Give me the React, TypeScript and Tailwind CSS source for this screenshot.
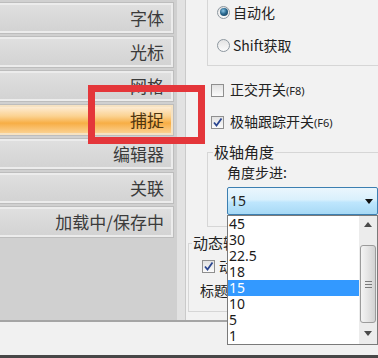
import React from 'react'

const navItems = ['字体', '光标', '网格', '捕捉', '编辑器', '关联', '加载中/保存中']
const activeItem = '捕捉'

const stepOptions = ['45', '30', '22.5', '18', '15', '10', '5', '1']
const selectedStep = '15'

function Radio({ checked }: { checked?: boolean }) {
  return (
    <span className="w-[13px] h-[13px] rounded-full border border-[#8d979f] bg-[linear-gradient(to_bottom,#e3e3e3,#fbfbfb)] flex items-center justify-center shrink-0">
      {checked && (
        <span className="w-[8px] h-[8px] rounded-full bg-[radial-gradient(circle_at_40%_35%,#8cc6e6_0%,#2a6990_45%,#133650_100%)]" />
      )}
    </span>
  )
}

function Checkbox({ checked }: { checked?: boolean }) {
  return (
    <span className="w-[13px] h-[13px] border border-[#8f8f8f] bg-[linear-gradient(to_bottom,#e2e2e2,#fbfbfb)] flex items-center justify-center shrink-0">
      {checked && (
        <svg width="11" height="11" viewBox="0 0 11 11">
          <path d="M2 5.5 L4.5 8.5 L9.5 1.5" fill="none" stroke="#2b4690" strokeWidth="1.8" />
        </svg>
      )}
    </span>
  )
}

function Triangle({ up, color = '#4a4a4a' }: { up?: boolean; color?: string }) {
  return (
    <svg width="8" height="5" viewBox="0 0 8 5">
      <path d={up ? 'M0 5 L4 0 L8 5 Z' : 'M0 0 L8 0 L4 5 Z'} fill={color} />
    </svg>
  )
}

export default function App() {
  return (
    <div className="relative w-[378px] h-[358px] overflow-hidden bg-[#f0f0f0] font-['Noto_Sans_CJK_SC','Noto_Sans',sans-serif] text-[#222]">
      <div className="flex h-[320px]">
        {/* left nav */}
        <div className="w-[177px] shrink-0 bg-[#d0d0d0] flex flex-col gap-[4px] pt-[3px]">
          {navItems.map((item) => (
            <div
              key={item}
              className={`ml-[-2px] w-[175px] h-[30px] border-2 flex items-center justify-end pr-[7px] text-[17px] leading-[20px] shadow-[0_0_0_1px_#bdbdbd] ${
                item === activeItem
                  ? 'border-[#f6e2c2] bg-[linear-gradient(to_bottom,#fdebd2_0%,#fbd291_35%,#f7ae45_62%,#fbd08f_100%)] text-[#4d3510]'
                  : 'border-[#ececec] bg-[linear-gradient(to_bottom,#dfdfdf,#d3d3d3)] text-[#3b3b3b]'
              }`}
            >
              {item}
            </div>
          ))}
        </div>
        <div className="w-[8px] shrink-0 bg-[#e2e2e2]" />

        {/* right settings */}
        <div className="w-[240px] shrink-0 border-l border-[#cacaca] bg-[#f2f2f2] flex flex-col text-[14px] leading-[16px]">
          <div className="ml-[21px] mt-[-4px] h-[70px] w-[220px] border border-[#d6d6d6] pt-[7px] pl-[9px]">
            <div className="h-[16px] flex items-center gap-[3px]">
              <Radio checked />
              <span>自动化</span>
            </div>
            <div className="h-[16px] mt-[17px] flex items-center gap-[3px]">
              <Radio />
              <span>Shift获取</span>
            </div>
          </div>

          <div className="ml-[25px] mt-[16px] h-[16px] flex items-center gap-[6px]">
            <Checkbox />
            <span>
              正交开关<span className="text-[11px] font-['Noto_Sans',sans-serif]">(F8)</span>
            </span>
          </div>
          <div className="ml-[25px] mt-[16px] h-[16px] flex items-center gap-[6px]">
            <Checkbox checked />
            <span>
              极轴跟踪开关<span className="text-[11px] font-['Noto_Sans',sans-serif]">(F6)</span>
            </span>
          </div>

          <fieldset className="ml-[21px] mt-[12px] w-[220px] border border-[#d6d6d6] pb-[11px]">
            <legend className="ml-[5px] px-[1px] text-[15px] leading-[20px]">极轴角度</legend>
            <div className="ml-[19px] mt-[2px] h-[16px] flex items-center">角度步进:</div>
            <div className="ml-[19px] mt-[7px] w-[151px] h-[28px] border border-[#3c7fb1] rounded-[2px] bg-[linear-gradient(to_bottom,#eaf6fd_0%,#d9f0fc_45%,#bee6fd_55%,#a7d9f5_100%)] flex items-center justify-between pl-[2px] pr-[4px] font-['Noto_Sans',sans-serif]">
              <span>{selectedStep}</span>
              <Triangle color="#111" />
            </div>
          </fieldset>

          <fieldset className="ml-[2px] mt-[6px] w-[230px] border border-[#d6d6d6] pb-[13px]">
            <legend className="ml-[3px] px-[1px] text-[15px] leading-[20px]">动态输入</legend>
            <div className="ml-[13px] mt-[5px] h-[16px] flex items-center gap-[4px]">
              <Checkbox checked />
              <span>动态提示</span>
            </div>
            <div className="ml-[11px] mt-[8px] h-[16px] flex items-center">标题栏</div>
          </fieldset>
        </div>
      </div>

      {/* bottom bar */}
      <div className="h-[2px] bg-[#a5a5a5]" />
      <div className="h-[33px] bg-[#f1f1f1]" />
      <div className="h-[3px] bg-[#474747]" />

      {/* red highlight box */}
      <div className="absolute left-[88px] top-[85px] w-[117px] h-[59px] border-[7px] border-[#e4363a]" />

      {/* dropdown list */}
      <div className="absolute left-[227px] top-[215px] w-[151px] h-[130px] border border-[#7a7a7a] bg-white flex font-['Noto_Sans',sans-serif] text-[14px]">
        <div className="flex-1 flex flex-col">
          {stepOptions.map((opt) => (
            <div
              key={opt}
              className={`h-[16px] leading-[16px] pl-[1px] ${
                opt === selectedStep ? 'bg-[#3399ff] text-white' : 'text-[#1a1a1a]'
              }`}
            >
              {opt}
            </div>
          ))}
        </div>
        <div className="w-[18px] bg-[#ececec] flex flex-col">
          <div className="h-[17px] flex items-center justify-center">
            <Triangle up />
          </div>
          <div className="mt-[12px] h-[78px] mx-[1px] rounded-[3px] border border-[#9b9b9b] bg-[linear-gradient(to_right,#f4f4f4,#e4e4e4_50%,#d2d2d2)] flex flex-col items-center justify-center gap-[2px]">
            <span className="w-[7px] h-[1px] bg-[#7a7a7a]" />
            <span className="w-[7px] h-[1px] bg-[#7a7a7a]" />
            <span className="w-[7px] h-[1px] bg-[#7a7a7a]" />
          </div>
          <div className="flex-1 flex items-center justify-center">
            <Triangle />
          </div>
        </div>
      </div>
    </div>
  )
}
